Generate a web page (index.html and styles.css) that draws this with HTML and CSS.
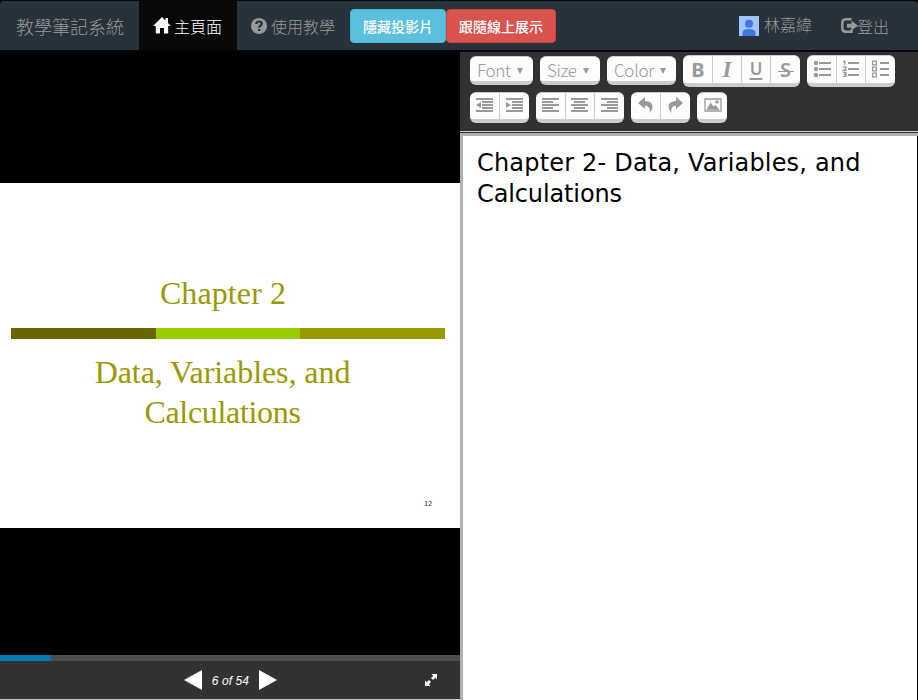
FILE: index.html
```html
<!DOCTYPE html>
<html lang="zh-Hant">
<head>
<meta charset="utf-8">
<title>教學筆記系統</title>
<link rel="stylesheet" href="styles.css">
</head>
<body>
<nav class="navbar">
  <a class="brand">教學筆記系統</a>
  <a class="nav-home"><svg width="18" height="17" viewBox="0 0 18 17"><path fill="#fff" d="M9 0 18 9H15.200V16.500H11V11H7V16.500H2.800V9H0L9 0ZM12.500 1H15V6L12.500 4Z"/></svg><span>主頁面</span></a>
  <a class="nav-help"><svg width="16" height="16" viewBox="0 0 16 16"><circle cx="8" cy="8" r="8" fill="#999"/><path d="M5.300 6Q5.500 3.500 8 3.500Q10.700 3.500 10.700 5.700Q10.700 7 9.300 7.700Q8.200 8.300 8.200 9.800" fill="none" stroke="#28323a" stroke-width="2.200"/><path d="M7 11h2.400v2H7z" fill="#28323a"/></svg><span>使用教學</span></a>
  <button class="btn info">隱藏投影片</button><button class="btn danger">跟隨線上展示</button>
  <div class="account">
    <svg width="20" height="20" viewBox="0 0 20 20"><path fill="#a1c4fb" d="M0 0h20v20H0z"/><circle cx="10" cy="7.700" r="4" fill="#4176e1"/><path fill="#4176e1" d="M3.500 20v-3q0-4 6.500-4t6.500 4v3z"/></svg>
    <span class="user">林嘉緯</span>
    <a class="logout"><svg width="17" height="15" viewBox="0 0 17 15"><path d="M10.500 1.300H5Q1.300 1.300 1.300 5V10Q1.300 13.700 5 13.700H10.500V11.500" fill="none" stroke="#999" stroke-width="2.500"/><path d="M6 5.700H10.500V2.800L17 7.700L10.500 12.500V9.700H6z" fill="#999"/></svg><span>登出</span></a>
  </div>
</nav>
<main class="workspace">
  <section class="viewer">
    <div class="stage">
      <div class="slide">
        <h1 class="s-title">Chapter 2</h1>
        <div class="stripe"><i></i><i></i><i></i></div>
        <p class="s-sub"><span class="s-data">Data, Variables, and</span><br><span>Calculations</span></p>
        <span class="page-no">12</span>
      </div>
    </div>
    <div class="progress"><div class="bar"></div></div>
    <div class="controls">
      <span></span>
      <div class="pager">
        <svg width="18" height="20"><path fill="#fff" d="M0 10 18 0V20z"/></svg>
        <span class="count">6 of 54</span>
        <svg width="18" height="20"><path fill="#fff" d="M18 10 0 0V20z"/></svg>
      </div>
      <svg class="expand" width="12" height="12" viewBox="0 0 12 12"><path fill="#fff" d="M6.500 0H12V5.500L10.300 3.800 8 6 6 4 8.200 1.700zM0 6.500 1.700 8.200 4 6 6 8 3.800 10.300 5.500 12H0z"/></svg>
    </div>
  </section>
  <section class="editor">
    <div class="toolbar">
      <div class="row row-main">
        <button class="pick w-font">Font<small></small></button>
        <button class="pick w-size">Size<small></small></button>
        <button class="pick w-color">Color<small></small></button>
        <div class="group">
          <b class="tool t-bold">B</b>
          <b class="tool t-italic">I</b>
          <b class="tool t-under">U</b>
          <b class="tool t-strike"><span>S</span></b>
        </div>
        <div class="group">
          <span class="tool"><svg width="18" height="18"><g fill="#999"><circle cx="3" cy="3" r="2.200"/><circle cx="3" cy="9" r="2.200"/><circle cx="3" cy="15" r="2.200"/><path d="M6 2h12v2H6zM6 8h12v2H6zM6 14h12v2H6z"/></g></svg></span>
          <span class="tool"><svg width="18" height="18"><path fill="#999" d="M6 2h11v2H6zM6 8h11v2H6zM6 14h11v2H6z"/><path fill="none" stroke="#999" stroke-width="1.300" d="M1 1.300H2.800V5M1 6.800H4V8.500L1.500 10.500H4.500M1 12.700H4V16.300H1M2 14.500H4"/></svg></span>
          <span class="tool"><svg width="18" height="18"><path fill="#999" d="M8 2h9v2H8zM8 8h9v2H8zM8 14h9v2H8z"/><path fill="none" stroke="#999" stroke-width="1.300" d="M.700 1.200h3.600v3.600h-3.600zM.700 7.200h3.600v3.600h-3.600zM.700 13.200h3.600v3.600h-3.600z"/></svg></span>
        </div>
      </div>
      <div class="row row-second">
        <div class="group">
          <span class="tool"><svg width="18" height="15"><path fill="#999" d="M0 0h17v2H0zM6 3h11v2H6zM6 6h11v2H6zM6 9h11v2H6zM0 12h17v2H0zM0 7 5 4V10z"/></svg></span>
          <span class="tool"><svg width="18" height="15"><path fill="#999" d="M0 0h17v2H0zM6 3h11v2H6zM6 6h11v2H6zM6 9h11v2H6zM0 12h17v2H0zM5 7 0 4V10z"/></svg></span>
        </div>
        <div class="group">
          <span class="tool"><svg width="18" height="15"><path fill="#999" d="M0 0h17v2H0zM0 3h11v2H0zM0 6h17v2H0zM0 9h11v2H0zM0 12h17v2H0z"/></svg></span>
          <span class="tool"><svg width="18" height="15"><path fill="#999" d="M0 0h17v2H0zM3 3h11v2H3zM0 6h17v2H0zM3 9h11v2H3zM0 12h17v2H0z"/></svg></span>
          <span class="tool"><svg width="18" height="15"><path fill="#999" d="M0 0h17v2H0zM6 3h11v2H6zM0 6h17v2H0zM6 9h11v2H6zM0 12h17v2H0z"/></svg></span>
        </div>
        <div class="group">
          <span class="tool"><svg width="16" height="16"><path fill="#999" d="M0 6 7 0V4Q14.500 4 14.500 10 14.500 13 11.500 16 13 9 7 8.500V12z"/></svg></span>
          <span class="tool"><svg width="16" height="16"><path fill="#999" d="M15 6 8 0V4Q.500 4 .500 10 .500 13 3.500 16 2 9 8 8.500V12z"/></svg></span>
        </div>
        <div class="group">
          <span class="tool"><svg width="18" height="14"><path fill="none" stroke="#999" stroke-width="1.300" d="M1 1h16v12H1z"/><path fill="#999" d="M2.500 11.700 6.500 4.500 9.500 8.500 11.500 7 15.500 11.700z"/><circle cx="13" cy="4" r="1.700" fill="#999"/></svg></span>
        </div>
      </div>
    </div>
    <div class="note" contenteditable="true" spellcheck="false"><span class="line-a">Chapter 2- Data, Variables, and</span><br><span class="line-b">Calculations</span></div>
  </section>
</main>
</body>
</html>
```

FILE: styles.css
```css
* { box-sizing: border-box; }
body { margin: 0; height: 700px; overflow: hidden; background: #000; display: flex; flex-direction: column; font-family: "Liberation Sans", "Noto Sans CJK TC", sans-serif; }
svg { display: block; flex: none; }
button { font: inherit; }

.navbar { height: 52px; flex: none; display: flex; border-top: 1px solid #080808; border-bottom: 2px solid #050505; border-radius: 4px 4px 0 0; background: #28323a; color: #999; font: 300 16px/49px "Noto Sans CJK TC", sans-serif; white-space: nowrap; }
.brand { width: 139px; padding-left: 16px; font-size: 18px; line-height: 51px; }
.nav-home { width: 98px; padding-left: 14px; display: flex; align-items: center; gap: 3px; background: #080808; color: #fff; }
.nav-help { width: 113px; padding-left: 14px; display: flex; align-items: center; gap: 4px; }
.nav-home span, .nav-help span { position: relative; top: 1px; }
.btn { height: 34px; margin: 8px 0 0; padding: 0; border-radius: 4px; color: #fff; font-size: 14px; font-weight: 500; line-height: 32px; }
.info { width: 96px; background: #5bc0de; border: 1px solid #46b8da; }
.danger { width: 110px; background: #d9534f; border: 1px solid #d43f3a; }
.account { margin-left: auto; width: 179px; display: flex; align-items: center; }
.user { margin-left: 5px; line-height: 47px; margin-top: -2px; }
.logout { display: flex; align-items: center; margin-left: 29px; }
.logout span { position: relative; top: 1px; left: -1px; }

.workspace { flex: 1; min-height: 0; display: flex; }
.viewer { width: 460px; display: flex; flex-direction: column; border-bottom: 1px solid #ccc; background: #000; }
.stage { flex: 1; padding-top: 131px; }
.slide { height: 345px; background: #fff; color: #999900; font-family: "Liberation Serif", serif; display: flex; flex-direction: column; }
.s-title { margin: 90px 0 0; padding-right: 14px; font-size: 32px; line-height: 40px; font-weight: 400; text-align: center; letter-spacing: .1px; }
.stripe { height: 11px; margin: 15px 15px 0 11px; display: flex; }
.stripe i { flex: 1; background: #666600; }
.stripe i + i { background: #99cc00; }
.stripe i + i + i { background: #999900; }
.s-sub { margin: 13px 0 0; padding-right: 15px; font-size: 32px; line-height: 40px; letter-spacing: -.32px; text-align: center; }
.s-data { letter-spacing: -.07px; }
.page-no { margin: 67px 28px 0 auto; font: 7px/10px "DejaVu Sans", sans-serif; color: #333; letter-spacing: -.4px; }
.progress { height: 6px; background: #4d4d4d; }
.bar { width: 51px; height: 6px; background: #007bb6; }
.controls { height: 38px; background: #323232; display: grid; grid-template-columns: 184px 1fr 35px; align-items: center; }
.pager { display: flex; align-items: center; }
.count { width: 57px; padding-top: 2px; text-align: center; color: #fff; font-size: 12px; font-style: italic; letter-spacing: .08px; }

.editor { flex: 1; display: flex; flex-direction: column; min-width: 0; }
.toolbar { height: 81px; background: #323232; border-bottom: 1px solid #323232; box-shadow: inset 0 -1px #ccc; padding: 3px 10px 0; }
.row { display: flex; gap: 7px; }
.row-main { height: 37px; }
.group { height: 32px; display: flex; background: #fdfdfd; border: solid #ccc; border-width: 1px 0 4px; border-radius: 6px; overflow: hidden; }
.row-second .group { height: 31px; }
.tool { width: 29px; padding-left: 1px; display: flex; align-items: center; justify-content: center; color: #999; font: 700 20px/26px "Noto Sans", sans-serif; }
.tool + .tool { border-left: 1px solid #ccc; padding-left: 0; }
.group .tool:last-child { width: 30px; }
.t-italic { font-family: "Liberation Serif", serif; font-style: italic; font-size: 23px; }
.t-under { font-size: 17px; font-weight: 600; text-decoration: underline; text-underline-offset: 3px; text-decoration-thickness: 2px; line-height: 22px; padding-bottom: 2px; }
.t-strike span { width: 16px; text-align: center; background: linear-gradient(#999, #999) 0 14px / 16px 1px no-repeat; font-weight: 600; }
.row-main .tool svg { position: relative; top: -1px; }
.row-second .tool { padding-bottom: 2px; }
.pick { height: 29px; margin: 1px 0 0; padding: 1px 0 0 7px; display: flex; align-items: center; background: #fdfdfd; color: #999; border: solid #ccc; border-width: 1px 0 4px; border-radius: 6px; font: 300 17px/23px "Noto Sans CJK TC", "Open Sans", sans-serif; letter-spacing: -.3px; }
.pick small { margin: 2px 0 0 6px; border: solid transparent; border-width: 6px 3px 0; border-top-color: #999; }
.w-font { width: 63px; }
.w-size { width: 60px; }
.w-color { width: 69px; }
.note { flex: 1; border: solid #b0b0b0; border-width: 3px 0 0 3px; box-shadow: inset -1px 0 #000; background: #fff; padding: 12px 14px; color: #000; font: 24px/31px "DejaVu Sans", sans-serif; white-space: nowrap; outline: 0; }
.line-a { letter-spacing: .19px; }
.line-b { letter-spacing: -.12px; }
```
